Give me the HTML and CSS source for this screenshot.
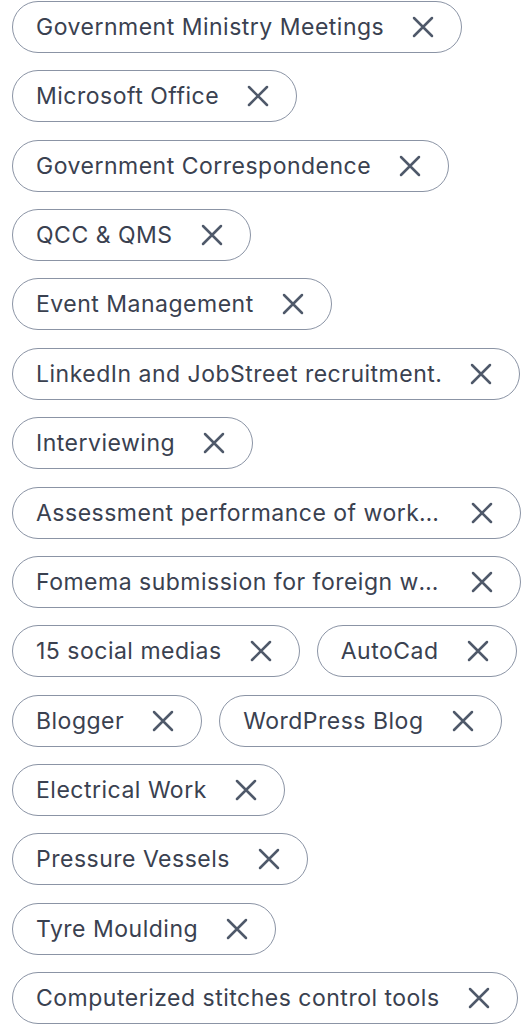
FILE: index.html
```html
<!DOCTYPE html>
<html lang="en">
<head>
    <meta charset="UTF-8">
    <title>Skills</title>
    <link rel="stylesheet" href="styles.css">
</head>
<body>

<!-- Lista de habilidades -->
<div class="chips">
    <div class="chip"><span class="chip-text">Government Ministry Meetings</span><button class="chip-close" aria-label="Remove"><svg viewBox="0 0 24 24"><path d="M3 3L21 21M21 3L3 21"/></svg></button></div>
    <div class="chip"><span class="chip-text">Microsoft Office</span><button class="chip-close" aria-label="Remove"><svg viewBox="0 0 24 24"><path d="M3 3L21 21M21 3L3 21"/></svg></button></div>
    <div class="chip"><span class="chip-text">Government Correspondence</span><button class="chip-close" aria-label="Remove"><svg viewBox="0 0 24 24"><path d="M3 3L21 21M21 3L3 21"/></svg></button></div>
    <div class="chip"><span class="chip-text">QCC &amp; QMS</span><button class="chip-close" aria-label="Remove"><svg viewBox="0 0 24 24"><path d="M3 3L21 21M21 3L3 21"/></svg></button></div>
    <div class="chip"><span class="chip-text">Event Management</span><button class="chip-close" aria-label="Remove"><svg viewBox="0 0 24 24"><path d="M3 3L21 21M21 3L3 21"/></svg></button></div>
    <div class="chip"><span class="chip-text">LinkedIn and JobStreet recruitment.</span><button class="chip-close" aria-label="Remove"><svg viewBox="0 0 24 24"><path d="M3 3L21 21M21 3L3 21"/></svg></button></div>
    <div class="chip"><span class="chip-text">Interviewing</span><button class="chip-close" aria-label="Remove"><svg viewBox="0 0 24 24"><path d="M3 3L21 21M21 3L3 21"/></svg></button></div>
    <div class="chip"><span class="chip-text">Assessment performance of workers</span><button class="chip-close" aria-label="Remove"><svg viewBox="0 0 24 24"><path d="M3 3L21 21M21 3L3 21"/></svg></button></div>
    <div class="chip"><span class="chip-text">Fomema submission for foreign workers</span><button class="chip-close" aria-label="Remove"><svg viewBox="0 0 24 24"><path d="M3 3L21 21M21 3L3 21"/></svg></button></div>
    <div class="chip"><span class="chip-text">15 social medias</span><button class="chip-close" aria-label="Remove"><svg viewBox="0 0 24 24"><path d="M3 3L21 21M21 3L3 21"/></svg></button></div>
    <div class="chip"><span class="chip-text">AutoCad</span><button class="chip-close" aria-label="Remove"><svg viewBox="0 0 24 24"><path d="M3 3L21 21M21 3L3 21"/></svg></button></div>
    <div class="chip"><span class="chip-text">Blogger</span><button class="chip-close" aria-label="Remove"><svg viewBox="0 0 24 24"><path d="M3 3L21 21M21 3L3 21"/></svg></button></div>
    <div class="chip"><span class="chip-text">WordPress Blog</span><button class="chip-close" aria-label="Remove"><svg viewBox="0 0 24 24"><path d="M3 3L21 21M21 3L3 21"/></svg></button></div>
    <div class="chip"><span class="chip-text">Electrical Work</span><button class="chip-close" aria-label="Remove"><svg viewBox="0 0 24 24"><path d="M3 3L21 21M21 3L3 21"/></svg></button></div>
    <div class="chip"><span class="chip-text">Pressure Vessels</span><button class="chip-close" aria-label="Remove"><svg viewBox="0 0 24 24"><path d="M3 3L21 21M21 3L3 21"/></svg></button></div>
    <div class="chip"><span class="chip-text">Tyre Moulding</span><button class="chip-close" aria-label="Remove"><svg viewBox="0 0 24 24"><path d="M3 3L21 21M21 3L3 21"/></svg></button></div>
    <div class="chip"><span class="chip-text">Computerized stitches control tools</span><button class="chip-close" aria-label="Remove"><svg viewBox="0 0 24 24"><path d="M3 3L21 21M21 3L3 21"/></svg></button></div>
</div>

</body>
</html>
```
FILE: styles.css
```css
body {
    margin: 0;
    background-color: #fff;
    font-family: Inter, "Noto Sans", sans-serif;
}

.chips {
    display: flex;
    flex-wrap: wrap;
    align-items: flex-start;
    column-gap: 17px;
    row-gap: 17.36px;
    padding: 1px 7px 0 12px;
}

.chip {
    box-sizing: border-box;
    display: flex;
    align-items: center;
    height: 52px;
    max-width: 509px;
    padding: 0 26px 0 23px;
    border: 1px solid #8b94a5;
    border-radius: 26px;
    background-color: #fff;
}

.chip-text {
    min-width: 0;
    overflow: hidden;
    white-space: nowrap;
    text-overflow: ellipsis;
    font-size: 23px;
    letter-spacing: 0.5px;
    color: #3a4150;
}

.chip-close {
    flex: none;
    width: 24px;
    height: 24px;
    margin-left: 27px;
    padding: 0;
    border: none;
    background: none;
    cursor: pointer;
}

.chip-close svg {
    display: block;
    width: 24px;
    height: 24px;
    fill: none;
    stroke: #4f596a;
    stroke-width: 2.5;
    stroke-linecap: round;
}
```
